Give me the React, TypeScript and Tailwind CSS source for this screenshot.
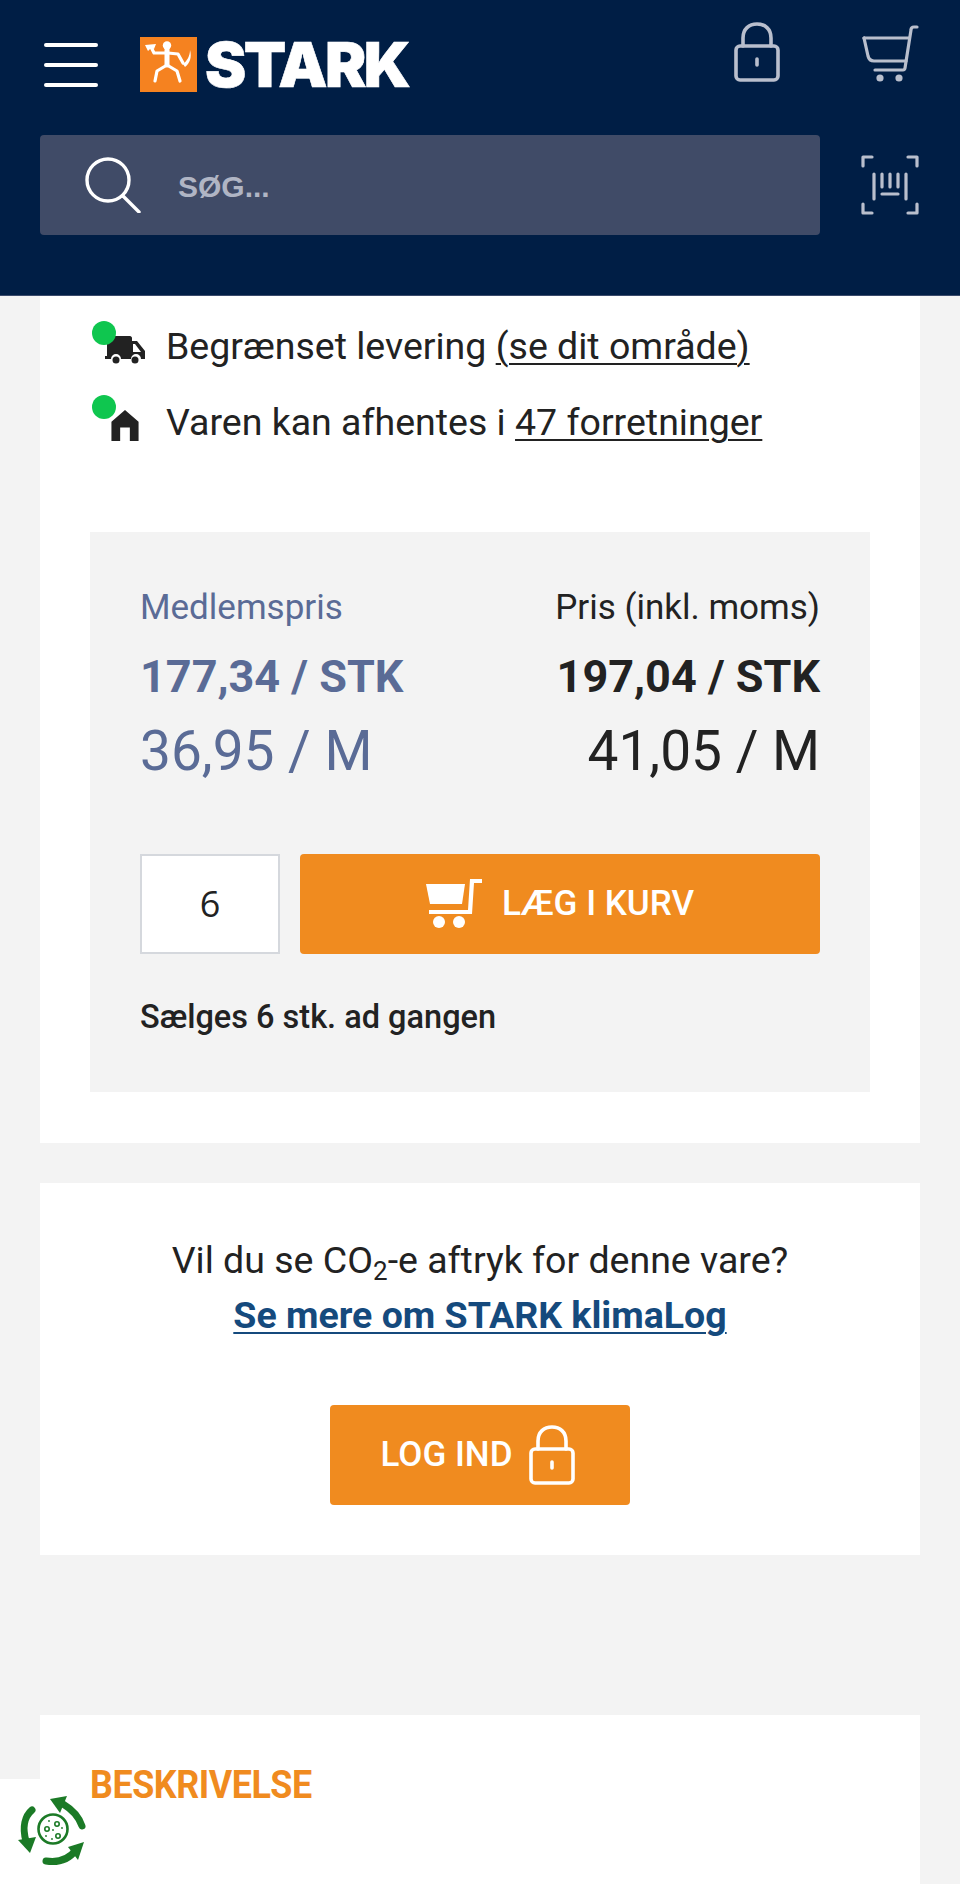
const LockIcon = ({ className }: { className: string }) => (
  <svg viewBox="0 0 46 60" fill="none" stroke="currentColor" strokeWidth="3.6" strokeLinecap="round" strokeLinejoin="round" className={className}>
    <rect x="2" y="24" width="42" height="34" rx="4" />
    <path d="M9 24V16C9 7 15 2 23 2s14 5 14 14v8" />
    <path d="M23 37v6" />
  </svg>
)

const Logo = () => (
  <div className="flex items-center gap-[8px]">
    <svg viewBox="0 0 57 55" className="w-[57px] h-[55px]">
      <rect width="57" height="55" fill="#f58220" />
      <circle cx="27" cy="8.5" r="4.2" fill="#fff" />
      <g fill="none" stroke="#fff" strokeWidth="3.2" strokeLinecap="round" strokeLinejoin="round">
        <path d="M27 13v15" strokeWidth="5" />
        <path d="M27 16H14l-3-6" />
        <path d="M28 16l10 1 5 9" />
        <path d="M27 28l-10 6-2 10" />
        <path d="M27 28l10 6 3 10" />
      </g>
      <path d="M5 8l11-1-2 5-3-1-3 3z" fill="#fff" />
      <path d="M43 27c4-3 7-8 7-14 2 7 0 13-5 17z" fill="#fff" />
    </svg>
    <span className="font-['Inter'] font-black text-[62px] leading-none tracking-[-2.5px] text-white [-webkit-text-stroke:0.6px_white]">STARK</span>
  </div>
)

const Header = () => (
  <header className="h-[296px] bg-[#001e45] border-b border-[#3a4a6b] px-[40px] flex flex-col">
    <div className="h-[135px] flex items-center pb-[6px]">
      <div className="w-[54px] ml-[4px] flex flex-col gap-[16px]">
        <span className="h-[4px] rounded-full bg-white" />
        <span className="h-[4px] rounded-full bg-white" />
        <span className="h-[4px] rounded-full bg-white" />
      </div>
      <div className="ml-[42px]">
        <Logo />
      </div>
      <div className="ml-auto self-start pt-[22px] flex items-start text-[#b9bfcd]">
        <LockIcon className="w-[46px] h-[60px]" />
        <svg viewBox="0 0 58 58" fill="none" stroke="currentColor" strokeWidth="3.2" strokeLinecap="round" strokeLinejoin="round" className="ml-[82px] mt-[3px] w-[58px] h-[58px]">
          <path d="M2 13h45" />
          <path d="M2 13l4 18c1 4 3 5 6 5h32" />
          <path d="M55 2h-3c-2 0-3 1-3 3l-6 38c0 1-1 2-2 2H13" />
          <circle cx="18" cy="53" r="2" fill="currentColor" />
          <circle cx="37" cy="53" r="2" fill="currentColor" />
        </svg>
      </div>
    </div>
    <div className="flex items-center">
      <div className="w-[780px] h-[100px] rounded-[4px] bg-[#404b67] flex items-center pl-[45px]">
        <svg viewBox="0 0 56 56" fill="none" stroke="#fff" strokeWidth="3.4" strokeLinecap="round" className="w-[56px] h-[56px]">
          <circle cx="23" cy="23" r="21" />
          <path d="M38 39l16 16" />
        </svg>
        <span className="ml-[37px] pt-[3px] font-['Liberation_Sans'] font-bold text-[30px] text-[#b0b5c4]">SØG...</span>
      </div>
      <svg viewBox="0 0 58 60" fill="none" stroke="#b9bfcd" strokeWidth="3.2" strokeLinecap="round" strokeLinejoin="round" className="ml-[41px] w-[58px] h-[60px]">
        <path d="M11 2H2v9M47 2h9v9M2 49v9h9M56 49v9h-9" />
        <path d="M13 19v25M45 19v25M21 19v13M29 19v13M37 19v13M21 39h16" />
      </svg>
    </div>
  </header>
)

const StatusRow = ({ icon, dotTop, children }: { icon: React.ReactNode; dotTop: string; children: React.ReactNode }) => (
  <div className="flex items-center h-[76px]">
    <div className="relative w-[76px] h-[76px] shrink-0">
      {icon}
      <span className={`absolute left-[2px] w-[24px] h-[24px] rounded-full bg-[#0fc64f] ${dotTop}`} />
    </div>
    <p className="text-[37.5px] text-[#222]">{children}</p>
  </div>
)

const Truck = () => (
  <svg viewBox="0 0 40 32" className="absolute left-[15px] top-[25px] w-[40px] h-[32px]" fill="#222">
    <path d="M3 3h22c1 0 2 1 2 2v3h5l8 10v8h-4a5 5 0 0 0-10 0H16a5 5 0 0 0-10 0H0v-3h2V5c0-1 0-2 1-2z" />
    <path d="M28 11v8h8l-6-8z" fill="#fff" />
    <circle cx="11" cy="27" r="3.5" />
    <circle cx="30" cy="27" r="3.5" />
  </svg>
)

const House = () => (
  <svg viewBox="0 0 28 32" className="absolute left-[21px] top-[26px] w-[28px] h-[31px]" fill="#222">
    <path d="M14 0l14 12v20h-9V18H9v14H0V12z" />
  </svg>
)

const ProductCard = () => (
  <section className="mx-[40px] bg-white h-[847px] px-[50px]">
    <div className="pt-[12px]">
      <StatusRow dotTop="top-[13px]" icon={<Truck />}>
        Begrænset levering <span className="underline underline-offset-[4px] decoration-2">(se dit område)</span>
      </StatusRow>
      <StatusRow dotTop="top-[11px]" icon={<House />}>
        Varen kan afhentes i <span className="underline underline-offset-[4px] decoration-2">47 forretninger</span>
      </StatusRow>
    </div>
    <div className="mt-[72px] h-[560px] bg-[#f3f3f3] px-[50px] pt-[54px]">
      <div className="flex justify-between">
        <div className="text-[#5a6b96]">
          <p className="text-[35px] leading-[44px]">Medlemspris</p>
          <p className="mt-[22px] text-[45px] leading-[50px] font-bold">177,34 / STK</p>
          <p className="mt-[17px] text-[55px] leading-[64px]">36,95 / M</p>
        </div>
        <div className="text-right text-[#222]">
          <p className="text-[35px] leading-[44px]">Pris (inkl. moms)</p>
          <p className="mt-[22px] text-[45px] leading-[50px] font-bold">197,04 / STK</p>
          <p className="mt-[17px] text-[55px] leading-[64px]">41,05 / M</p>
        </div>
      </div>
      <div className="mt-[71px] flex gap-[20px]">
        <div className="w-[140px] h-[100px] bg-white border-2 border-[#d5d8dd] flex items-center justify-center text-[36px] text-[#222] font-['Open_Sans']">6</div>
        <button className="flex-1 h-[100px] rounded-[4px] bg-[#f08b1f] flex items-center justify-center gap-[20px] text-white text-[35px] font-medium">
          <svg viewBox="0 0 56 50" className="w-[56px] h-[50px]" fill="#fff">
            <path d="M0 5h39l-3 20H4z" />
            <path d="M44 0h12v4h-8l-2 31H3v-4h39z" />
            <circle cx="13" cy="43" r="6" />
            <circle cx="33" cy="43" r="6" />
          </svg>
          LÆG I KURV
        </button>
      </div>
      <p className="mt-[43px] text-[32.5px] leading-[40px] font-medium text-[#222]">Sælges 6 stk. ad gangen</p>
    </div>
  </section>
)

const ClimateCard = () => (
  <section className="mx-[40px] mt-[40px] bg-white h-[372px] flex flex-col items-center pt-[53px]">
    <p className="text-[37.5px] leading-[48px] text-[#222]">
      Vil du se CO<sub className="text-[26px] leading-none">2</sub>-e aftryk for denne vare?
    </p>
    <a className="mt-[7px] text-[37.5px] leading-[48px] font-bold text-[#154a7d] underline underline-offset-[4px] decoration-2">Se mere om STARK klimaLog</a>
    <button className="mt-[66px] w-[300px] h-[100px] pr-[5px] rounded-[4px] bg-[#f08b1f] flex items-center justify-center gap-[16px] text-white text-[35px] font-medium">
      LOG IND
      <LockIcon className="w-[46px] h-[60px]" />
    </button>
  </section>
)

const RecycleBadge = () => (
  <div className="absolute left-0 bottom-0 w-[90px] h-[105px] bg-white">
    <svg viewBox="0 0 90 105" className="w-[90px] h-[105px]">
      <g fill="none" stroke="#1b7a26" strokeWidth="7" strokeLinecap="round">
        <path d="M32 31C25 37 22 48 26 62" />
        <path d="M82 47C79 38 73 31 63 25" />
        <path d="M46 82C59 84 69 80 76 71" />
      </g>
      <g fill="#1b7a26">
        <path d="M18 61L36 58L30 74z" />
        <path d="M50 20L67 17L60 34z" />
        <path d="M84 63L68 68L78 81z" />
      </g>
      <g fill="none" stroke="#1b7a26">
        <circle cx="53" cy="50" r="14.5" strokeWidth="2.6" />
        <circle cx="47" cy="50" r="2.2" strokeWidth="1.6" />
        <circle cx="57" cy="45" r="2.2" strokeWidth="1.6" />
        <circle cx="58" cy="57" r="2.2" strokeWidth="1.6" />
      </g>
      <g fill="#1b7a26">
        <circle cx="49" cy="42" r="0.9" />
        <circle cx="53" cy="51" r="0.9" />
        <circle cx="62" cy="49" r="0.9" />
        <circle cx="46" cy="57" r="0.9" />
        <circle cx="52" cy="60" r="0.9" />
      </g>
    </svg>
  </div>
)

export default function App() {
  return (
    <div className="relative h-[1884px] overflow-hidden bg-[#f3f3f3] font-['Roboto',sans-serif]">
      <Header />
      <ProductCard />
      <ClimateCard />
      <section className="mx-[40px] mt-[160px] bg-white h-[169px] px-[50px] pt-[45px]">
        <h2 className="text-[39px] leading-[50px] font-bold text-[#f08b1f] tracking-[-0.5px] scale-x-[0.92] origin-left">BESKRIVELSE</h2>
      </section>
      <RecycleBadge />
    </div>
  )
}
